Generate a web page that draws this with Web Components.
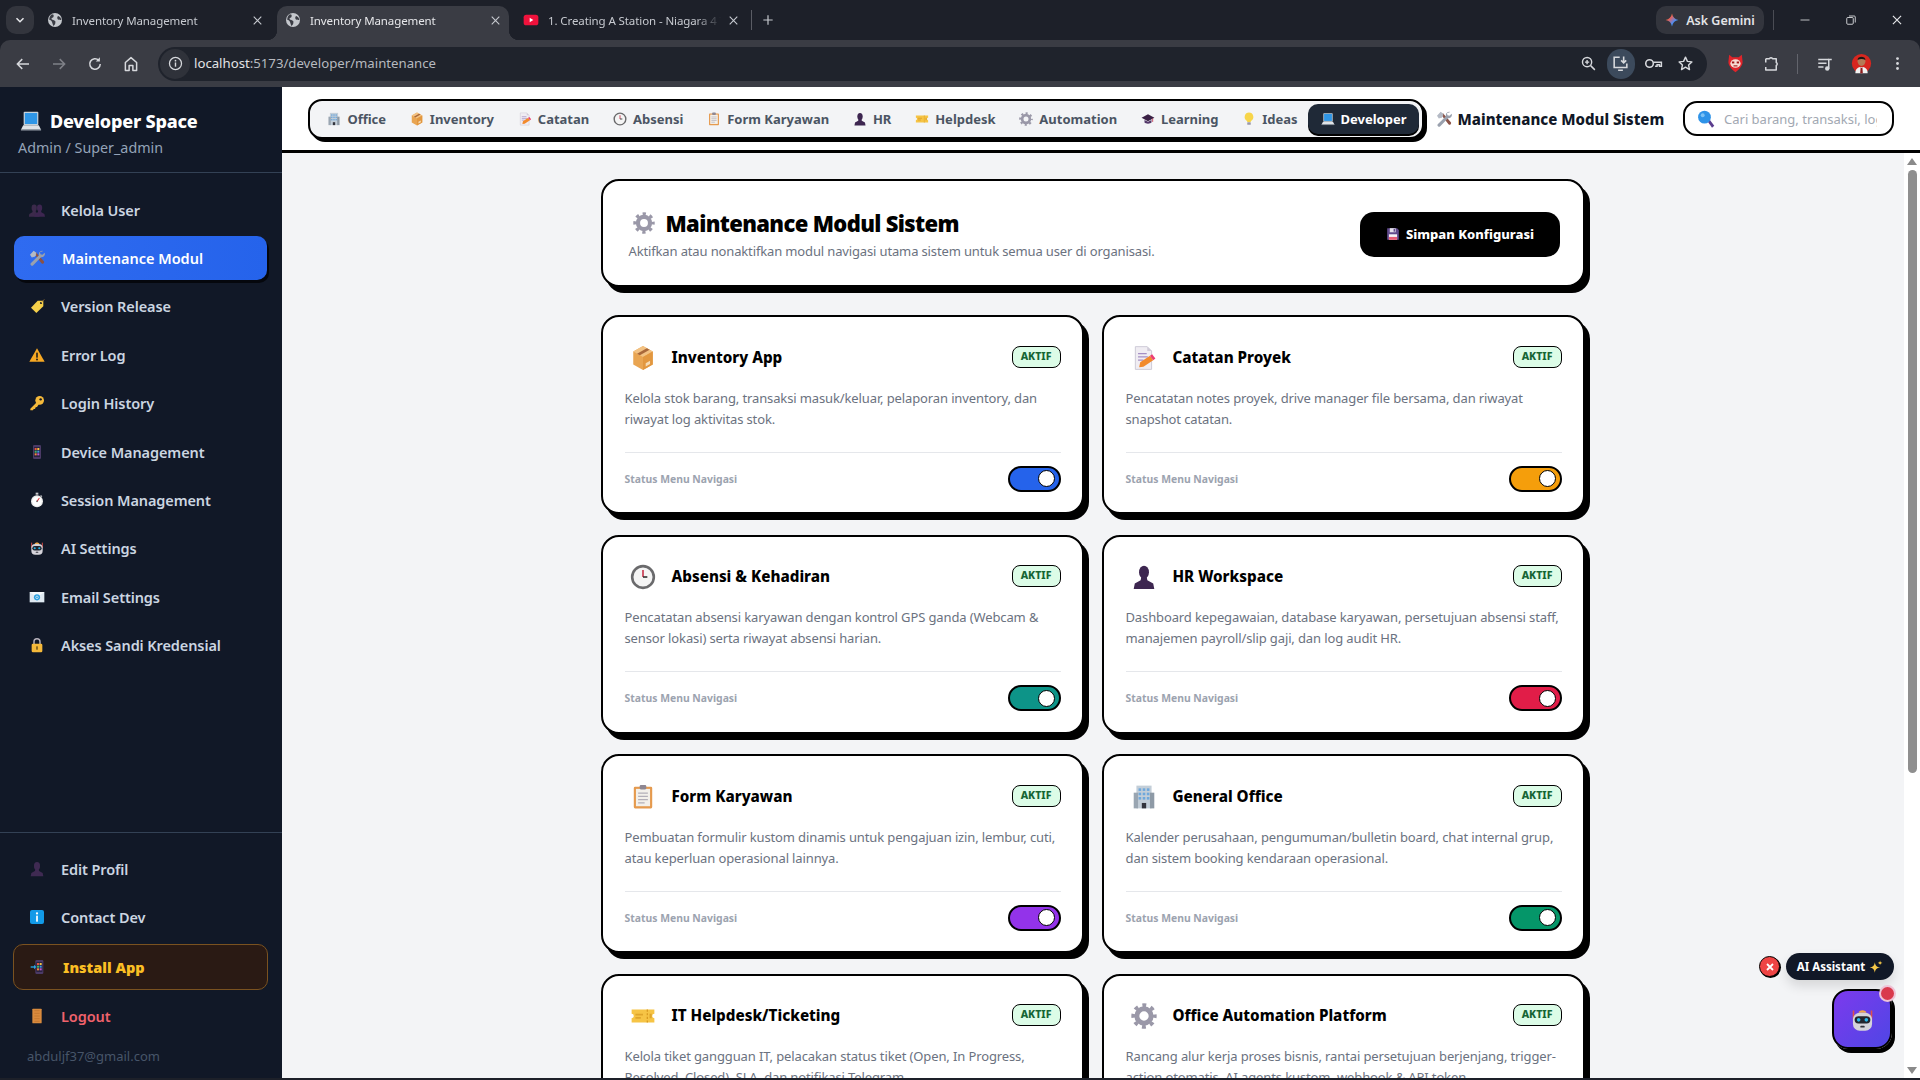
<!DOCTYPE html>
<html lang="id">
<head>
<meta charset="utf-8">
<title>Inventory Management</title>
<style>
html, body { margin: 0; padding: 0; width: 1920px; height: 1080px; overflow: hidden; background: #f3f4f6; }
body { font-family: "Noto Sans", "Open Sans", sans-serif; }
</style>
</head>
<body>
<app-root></app-root>
<script>
// semua ikon digambar manual, emoji tidak tersedia di sandbox
const gear = (c) => `<circle cx="12" cy="12" r="6.6" fill="none" stroke="${c}" stroke-width="4.6"/><circle cx="12" cy="12" r="10" fill="none" stroke="${c}" stroke-width="3.4" stroke-dasharray="3.6 4.25" stroke-dashoffset="1.8"/>`;
const phone = `<rect x="6" y="1.5" width="12" height="21" rx="2" fill="#4b3a66"/><rect x="7.5" y="4.5" width="9" height="15" fill="#2a2340"/><rect x="8.5" y="6" width="3" height="3" fill="#e8553f"/><rect x="12.5" y="6" width="3" height="3" fill="#f5c242"/><rect x="8.5" y="10" width="3" height="3" fill="#3fb56b"/><rect x="12.5" y="10" width="3" height="3" fill="#3b9be0"/><rect x="8.5" y="14" width="3" height="3" fill="#f28a3c"/><rect x="12.5" y="14" width="3" height="3" fill="#c05bd0"/>`;
const bust = (c) => `<ellipse cx="12" cy="7.5" rx="4.6" ry="6" fill="${c}"/><path d="M9.5 12h5l.6 3 5.4 3 1 5H2.5l1-5 5.4-3z" fill="${c}"/>`;
const ICONS = {
  building: `<rect x="5" y="1.5" width="14" height="21" fill="#c3ced8"/><rect x="2.5" y="8" width="4" height="14.5" fill="#9aa6b2"/><rect x="17.5" y="8" width="4" height="14.5" fill="#8e9aa6"/><g fill="#6fa8dc"><rect x="7" y="4" width="2.4" height="2.4"/><rect x="10.8" y="4" width="2.4" height="2.4"/><rect x="14.6" y="4" width="2.4" height="2.4"/><rect x="7" y="8" width="2.4" height="2.4"/><rect x="10.8" y="8" width="2.4" height="2.4"/><rect x="14.6" y="8" width="2.4" height="2.4"/><rect x="7" y="12" width="2.4" height="2.4"/><rect x="10.8" y="12" width="2.4" height="2.4"/><rect x="14.6" y="12" width="2.4" height="2.4"/></g><rect x="10" y="17.5" width="4" height="5" fill="#33343c"/>`,
  package: `<path d="M12 1 21 6v12l-9 5-9-5V6z" fill="#e9a552"/><path d="M12 1 21 6l-9 5-9-5z" fill="#f3c283"/><path d="M12 11 21 6v12l-9 5z" fill="#e2973f"/><path d="m6.5 8 9-5.100 2.600 1.500-9 5.100z" fill="#a9683a"/><path d="m14.500 16.800 4-2.200v3l-4 2.200z" fill="#f6dcb6"/>`,
  memo: `<path d="M4 1.500h11l4 4v17H4z" fill="#f0edf3" stroke="#c9c5d2" stroke-width=".8"/><path d="M15 1.500v4h4z" fill="#cfcad8"/><g stroke="#a58fc4" stroke-width="1.2"><path d="M6.500 8h8M6.500 11h9M6.500 14h5"/></g><path d="m7.500 20.500 1-4.500 9-6 3 4-9 6z" fill="#f28a2c"/><path d="m17.500 10 2-1.400 3 3.900-2 1.500z" fill="#ec3d73"/>`,
  clock: `<circle cx="12" cy="12" r="10" fill="#f4f4f4" stroke="#6a6a6c" stroke-width="2.4"/><path d="M12 5.500V12" stroke="#c8344c" stroke-width="1.5"/><path d="M12 12h4" stroke="#333" stroke-width="1.5"/>`,
  clipboard: `<rect x="3.500" y="2.500" width="17" height="20" rx="1.2" fill="#e59a4e"/><rect x="5.500" y="4.500" width="13" height="16" fill="#f3f0ea"/><rect x="9" y="1" width="6" height="4" rx="1" fill="#8e8792"/><g stroke="#b3afb8" stroke-width="1.2"><path d="M7.500 8.500h9M7.500 11.500h9M7.500 14.500h9M7.500 17.500h6"/></g>`,
  bust: bust('#3d2650'),
  ticket: `<path d="M1.500 6h21v4a2 2 0 0 0 0 4v4h-21v-4a2 2 0 0 0 0-4z" fill="#f6c445"/><path d="M16 6v12" stroke="#d99b22" stroke-width="1.2" stroke-dasharray="2 1.4"/><path d="M5 10h7v1.500H5zM5 13h5v1.500H5zM18 10h2v4h-2z" fill="#dfa52c"/>`,
  gear: gear('#9a98a8'),
  cap: `<path d="M12 4 23 10l-11 6L1 10z" fill="#3a2145"/><path d="M6 13.500V18c2 2.600 10 2.600 12 0v-4.500l-6 3.200z" fill="#54386a"/><path d="M20 11.200V17" stroke="#c8344c" stroke-width="1.4"/>`,
  bulb: `<path d="M12 1a7.500 7.500 0 0 0-4 13.800c.6.500 1 1.400 1 2.200h6c0-.8.4-1.700 1-2.200A7.500 7.500 0 0 0 12 1z" fill="#f7d54a"/><rect x="9" y="17.500" width="6" height="4.500" rx="1" fill="#9a98a8"/>`,
  laptop: `<rect x="4" y="2" width="16" height="14.500" rx="1" fill="#c8d2da"/><rect x="5.300" y="3.300" width="13.400" height="12" fill="#2f96e6"/><path d="M3.500 16.500h17L23 21.500H1z" fill="#dfe3e7"/><rect x="1" y="21" width="22" height="1.400" fill="#8f96a0"/>`,
  tools: `<path d="m8 6 2.500-2.500L22 16.500a2.300 2.300 0 0 1-3.300 3.300z" fill="#8a5246"/><path d="M1.500 7 7 1l4.500 3.500-1.500 1.500 1 1.500-3.500 3.500-1.500-1-1.500 1.500z" fill="#b4bac5"/><path d="M21.500 1.500a5.200 5.200 0 0 0-6.600 6.300L3 19.500a2.400 2.400 0 0 0 3.400 3.400L18 11a5.200 5.200 0 0 0 5.500-7l-3.300 3.200-3-.8-.8-3z" fill="#9aa1ae"/>`,
  tag: `<path d="M13 4h8.500v8.300L11 22.500 3 14.500z" fill="#f5cf4a"/><circle cx="18" cy="7.500" r="1.600" fill="#111827"/><path d="M18 7.500 23 2" stroke="#b98b3a" stroke-width="1"/>`,
  warn: `<path d="M12 2 23.500 22H.5z" fill="#f7a823"/><rect x="10.700" y="8.500" width="2.600" height="7.500" fill="#33291a"/><circle cx="12" cy="18.700" r="1.600" fill="#33291a"/>`,
  key: `<circle cx="16" cy="8" r="6.500" fill="#f5b93a"/><circle cx="17.500" cy="6.500" r="1.800" fill="#111827"/><path d="M12 10.500 2 20.500v2.500h4l1-2h2l1-2.500 2-.5 3-4.500z" fill="#f5b93a"/>`,
  phone: phone,
  stopwatch: `<rect x="10" y="1" width="4" height="3" fill="#c8c8cc"/><path d="m18 4.500 2 2-1.200 1.200-2-2z" fill="#b8b8bc"/><circle cx="12" cy="14" r="9" fill="#ececec"/><circle cx="12" cy="14" r="7" fill="#fff"/><path d="m12 14 3.600-5" stroke="#d8343c" stroke-width="1.6"/><circle cx="12" cy="14" r="1.200" fill="#555"/>`,
  robot: `<path d="M4 4v8M20 4v8" stroke="#e0504a" stroke-width="1.4"/><path d="M8.500 6c0-3 7-3 7 0z" fill="#f0a94a"/><rect x="3.500" y="6" width="17" height="16" rx="6" fill="#d5d3da"/><rect x="5" y="9" width="14" height="6.600" rx="3.300" fill="#22252e"/><circle cx="8.600" cy="12.300" r="1.600" fill="#28b6ea"/><circle cx="15.400" cy="12.300" r="1.600" fill="#28b6ea"/><rect x="10" y="17.600" width="4" height="1.600" rx=".8" fill="#33343c"/>`,
  mail: `<rect x="1" y="4.500" width="22" height="15.500" fill="#dfe9f2"/><path d="m1 4.500 11 8 11-8z" fill="#f5f8fb"/><circle cx="12" cy="12.500" r="4.600" fill="#2a9fe0"/><circle cx="12" cy="12.500" r="1.900" fill="none" stroke="#e8f4fb" stroke-width="1.1"/>`,
  lock: `<path d="M7.500 11V7a4.500 4.500 0 0 1 9 0v4" fill="none" stroke="#b7b2bc" stroke-width="2.2"/><rect x="4" y="10" width="16" height="13" rx="2" fill="#f5b93a"/><rect x="11" y="14" width="2" height="5" fill="#5a4316"/>`,
  busts: `<g transform="translate(-5 0) scale(.85) translate(3 3)" opacity=".75">${bust('#4b3158')}</g><g transform="translate(4 0) scale(.85) translate(2 3)">${bust('#3d2650')}</g>`,
  user: bust('#3f2a52'),
  info: `<rect x="1.500" y="1.500" width="21" height="21" rx="3" fill="#129ae8"/><rect x="10.700" y="10" width="2.600" height="9" fill="#fff"/><circle cx="12" cy="6.600" r="1.700" fill="#fff"/>`,
  install: `<g transform="translate(2 0)">${phone}</g><path d="M1 12h6" stroke="#28a8ea" stroke-width="2"/><path d="m6 8.800 3.400 3.200L6 15.200z" fill="#28a8ea"/>`,
  door: `<rect x="5" y="1" width="14" height="22" rx="1" fill="#d98a3d"/><path d="M8 4h8M8 8h8M8 12h8M8 16h8M8 20h8" stroke="#b96f2c" stroke-width="1"/>`,
  floppy: `<path d="M2 2h17l3 3v17H2z" fill="#604a8c"/><rect x="6.500" y="2" width="10" height="7" fill="#e5e2ec"/><rect x="13" y="3" width="2.400" height="5" fill="#604a8c"/><rect x="5" y="12.500" width="14" height="9.500" fill="#f6f5f8"/><rect x="5" y="17" width="14" height="5" fill="#e85d76"/>`,
  search: `<path d="m14 15 3-2 6 8-3 2.500z" fill="#5b3d8e"/><circle cx="10" cy="9.500" r="8.500" fill="#2e93e8"/><circle cx="7.600" cy="7" r="2.600" fill="#7cc2f5"/>`,
  sparkles: `<path d="M10 4c1 6 3 8 9 9-6 1-8 3-9 9-1-6-3-8-9-9 6-1 8-3 9-9z" fill="#f7c948"/><path d="M19 1c.4 2.600 1.400 3.600 4 4-2.600.4-3.600 1.400-4 4-.4-2.600-1.400-3.600-4-4 2.600-.4 3.600-1.400 4-4z" fill="#f7c948"/>`,
  // ikon browser
  back: `<path d="M20 12H5M11 5.500 4.500 12l6.500 6.500" fill="none" stroke="currentColor" stroke-width="2"/>`,
  forward: `<path d="M4 12h15M13 5.500l6.500 6.500-6.500 6.500" fill="none" stroke="currentColor" stroke-width="2"/>`,
  reload: `<path d="M19 12a7 7 0 1 1-2-5" fill="none" stroke="currentColor" stroke-width="2"/><path d="M18.500 3v5.500H13z" fill="currentColor"/>`,
  home: `<path d="M4.500 20.500V10L12 3.500l7.500 6.500v10.500h-5V14h-5v6.500z" fill="none" stroke="currentColor" stroke-width="2" stroke-linejoin="round"/>`,
  circleinfo: `<circle cx="12" cy="12" r="8.500" fill="none" stroke="currentColor" stroke-width="1.800"/><rect x="11" y="10.500" width="2" height="6" fill="currentColor"/><circle cx="12" cy="8" r="1.200" fill="currentColor"/>`,
  zoom: `<circle cx="10" cy="10" r="6.500" fill="none" stroke="currentColor" stroke-width="2"/><path d="m15 15 6 6M7 10h6M10 7v6" stroke="currentColor" stroke-width="2"/>`,
  pwa: `<path d="M11 4H4v13h16v-5M9 20.500h6" fill="none" stroke="currentColor" stroke-width="2"/><path d="M16 3v8M12.800 8l3.200 3.200L19.200 8" fill="none" stroke="currentColor" stroke-width="2"/>`,
  keyline: `<circle cx="7" cy="12" r="4.800" fill="none" stroke="currentColor" stroke-width="2"/><path d="M12 10.500h10v5h-2.500v-2h-3v2H14" fill="none" stroke="currentColor" stroke-width="1.800"/>`,
  star: `<path d="m12 3 2.700 6 6.300.7-4.700 4.300 1.300 6.500L12 17.200 6.400 20.500 7.700 14 3 9.700 9.300 9z" fill="none" stroke="currentColor" stroke-width="2" stroke-linejoin="round"/>`,
  puzzle: `<path d="M5 5h5a2.200 2.200 0 0 1 4 0h5v5a2.200 2.200 0 0 1 0 4v6H5v-4" fill="none" stroke="currentColor" stroke-width="2" stroke-linejoin="round"/><path d="M5 5v5" stroke="currentColor" stroke-width="2"/>`,
  media: `<path d="M3 6h14M3 11h11M3 16h7" stroke="currentColor" stroke-width="2"/><path d="M17 18V6h4" fill="none" stroke="currentColor" stroke-width="2"/><circle cx="15" cy="18" r="3" fill="currentColor"/>`,
  dots: `<circle cx="12" cy="5" r="2" fill="currentColor"/><circle cx="12" cy="12" r="2" fill="currentColor"/><circle cx="12" cy="19" r="2" fill="currentColor"/>`,
  close: `<path d="m5 5 14 14M19 5 5 19" stroke="currentColor" stroke-width="2"/>`,
  closebold: `<path d="m6 6 12 12M18 6 6 18" stroke="currentColor" stroke-width="3.600"/>`,
  plus: `<path d="M12 4v16M4 12h16" stroke="currentColor" stroke-width="2"/>`,
  chevron: `<path d="m6 9 6 6 6-6" fill="none" stroke="currentColor" stroke-width="2.600"/>`,
  minimize: `<path d="M3 12h18" stroke="currentColor" stroke-width="1.600"/>`,
  restore: `<rect x="3.500" y="7" width="13" height="13.500" rx="2" fill="none" stroke="currentColor" stroke-width="1.700"/><path d="M8 4h10.500a2 2 0 0 1 2 2v11" fill="none" stroke="currentColor" stroke-width="1.700"/>`,
  globe: `<circle cx="12" cy="12" r="10.500" fill="#c4c7cc"/><path d="M8 3c-3 2-5 5-4.500 9 2 0 3 1 4 3 1 2 1 4 2 6 2-2 3-3 3-5 1-2-1-3-3-4-2 0-3-1-2.500-3 1.500 0 3-1 3-3 0-1.500 0-2-2.500-3zM17 6c-2 1-2 3-1 5 2 1 4 1 5.500 1-.3-2.500-2-5-4.500-6z" fill="#3a3c44"/>`,
  youtube: `<rect x="1" y="4" width="22" height="16" rx="4" fill="#f0123c"/><path d="m10 8.500 5.500 3.500-5.500 3.500z" fill="#fff"/>`,
  shield: `<path d="M4 1 8 4h8l4-3 1 9c0 5-5 10-9 13-4-3-9-8-9-13z" fill="#e0242a"/><ellipse cx="12" cy="12" rx="6.500" ry="5.500" fill="#f8dcd4"/><rect x="7.500" y="9.500" width="3" height="2.400" fill="#a01818"/><rect x="13.500" y="9.500" width="3" height="2.400" fill="#a01818"/><path d="M9.500 15h5" stroke="#a01818" stroke-width="1.400"/>`,
  avatar: `<circle cx="12" cy="12" r="11" fill="#d8261f"/><ellipse cx="12" cy="9.500" rx="4.500" ry="5.300" fill="#b57a56"/><path d="M7.500 8c0-5 9-5 9 0-3-1.500-6-1.500-9 0z" fill="#1d1512"/><path d="M5 23c0-5 3-7 7-7s7 2 7 7z" fill="#f2f2f2"/><path d="m11 16 1 1 1-1 .5 7h-3z" fill="#8c1c1c"/>`,
  gemini: `<defs><linearGradient id="g" x1="0" y1="0" x2="1" y2="1"><stop offset="0" stop-color="#f4b400"/><stop offset=".35" stop-color="#e8615a"/><stop offset=".65" stop-color="#4c8df5"/><stop offset="1" stop-color="#34c3e8"/></linearGradient></defs><path d="M12 1c1.300 6.500 4.500 9.700 11 11-6.500 1.300-9.700 4.500-11 11-1.300-6.500-4.500-9.700-11-11 6.500-1.300 9.700-4.500 11-11z" fill="url(#g)"/>`
};

class XIcon extends HTMLElement {
  connectedCallback() {
    const size = this.getAttribute('size') || 16;
    this.attachShadow({ mode: 'open' });
    this.shadowRoot.innerHTML = `
      <style>
        :host { display: inline-flex; flex: none; width: ${size}px; height: ${size}px; line-height: 0; }
        svg { width: 100%; height: 100%; display: block; }
      </style>
      <svg viewBox="0 0 24 24">${ICONS[this.getAttribute('name')] || ''}</svg>`;
  }
}

class ChromeTab extends HTMLElement {
  connectedCallback() {
    const icon = this.getAttribute('icon') || 'globe';
    this.attachShadow({ mode: 'open' });
    this.shadowRoot.innerHTML = `
      <style>
        :host { display: flex; align-items: center; flex: none; position: relative; width: 232px; height: 34px; box-sizing: border-box; padding: 0 6px 6px 8px; color: #c7cad0; font-size: 11.5px; letter-spacing: -.1px; border-radius: 10px 10px 0 0; }
        :host([active]) { background: #3a3c44; color: #e6e7ea; }
        :host([active])::before, :host([active])::after { content: ""; position: absolute; bottom: 0; width: 10px; height: 10px; background: radial-gradient(circle at 0 0, transparent 10px, #3a3c44 10.5px); }
        :host([active])::before { left: -10px; }
        :host([active])::after { right: -10px; background: radial-gradient(circle at 100% 0, transparent 10px, #3a3c44 10.5px); }
        .txt { flex: 1; margin-left: 9px; white-space: nowrap; overflow: hidden; -webkit-mask-image: linear-gradient(90deg, #000 85%, transparent 100%); mask-image: linear-gradient(90deg, #000 85%, transparent 100%); }
        x-icon { color: #c7cad0; }
      </style>
      <x-icon name="${icon}" size="16"></x-icon>
      <span class="txt"><slot></slot></span>
      <x-icon name="close" size="13" style="margin:0 1px 0 6px"></x-icon>`;
  }
}

class BrowserChrome extends HTMLElement {
  connectedCallback() {
    this.attachShadow({ mode: 'open' });
    this.shadowRoot.innerHTML = `
      <style>
        :host { display: block; flex: none; height: 87px; background: #1d2029; color: #c7cad0; font-size: 13.2px; }
        .strip { display: flex; align-items: flex-start; height: 40px; padding: 6px 0 0 6px; box-sizing: border-box; }
        .down { width: 28px; height: 28px; border-radius: 10px; background: #33353d; display: flex; align-items: center; justify-content: center; margin-right: 5px; color: #e6e7ea; }
        .sp { width: 6px; flex: none; }
        .sep { width: 1px; height: 20px; background: #5a5c64; margin: 4px 0 0 4px; }
        .plus { margin: 7px 0 0 9px; color: #c7cad0; }
        .gem { margin-left: auto; display: flex; align-items: center; gap: 7px; height: 28px; width: 108px; justify-content: center; box-sizing: border-box; background: #33353d; border-radius: 10px; color: #e3e4e7; font-size: 12.5px; font-weight: 600; }
        .wsep { width: 1px; height: 20px; background: #4a4c54; margin: 4px 8px 0 9px; }
        .win { width: 46px; height: 28px; display: flex; align-items: center; justify-content: center; color: #e6e7ea; }
        .bar { display: flex; align-items: center; height: 47px; background: #3a3c44; border-radius: 10px 10px 0 0; padding-left: 5px; }
        .btn { width: 36px; height: 34px; display: flex; align-items: center; justify-content: center; color: #d6d8dc; flex: none; }
        .btn.off { color: #7f8188; }
        .url { display: flex; align-items: center; flex: none; width: 1549px; height: 34px; margin-left: 9px; border-radius: 17px; background: #1f232c; box-sizing: border-box; padding-left: 2px; padding-right: 6px; }
        .inf { width: 30px; height: 30px; border-radius: 50%; background: #2f323a; display: flex; align-items: center; justify-content: center; color: #d6d8dc; }
        .addr { margin-left: 4px; padding-bottom: 2px; color: #e3e4e7; flex: 1; }
        .addr span { color: #b6b9bf; }
        .u { width: 32px; height: 34px; display: flex; align-items: center; justify-content: center; color: #d6d8dc; }
        .u.hl { background: #3c4a5c; border-radius: 15px; width: 24px; height: 30px; margin: 0 2.5px; padding: 0 2px; }
        .right { display: flex; align-items: center; margin-left: 10px; }
        .vsep { width: 1px; height: 20px; background: #62646c; margin: 0 8px 0 8px; }
      </style>
      <div class="strip">
        <div class="down"><x-icon name="chevron" size="14"></x-icon></div>
        <chrome-tab>Inventory Management</chrome-tab>
        <span class="sp"></span>
        <chrome-tab active>Inventory Management</chrome-tab>
        <span class="sp"></span>
        <chrome-tab icon="youtube">1. Creating A Station - Niagara 4 Training</chrome-tab>
        <span class="sep"></span>
        <x-icon class="plus" name="plus" size="14"></x-icon>
        <div class="gem"><x-icon name="gemini" size="14"></x-icon>Ask Gemini</div>
        <span class="wsep"></span>
        <div class="win"><x-icon name="minimize" size="12"></x-icon></div>
        <div class="win"><x-icon name="restore" size="12"></x-icon></div>
        <div class="win"><x-icon name="close" size="14"></x-icon></div>
      </div>
      <div class="bar">
        <div class="btn"><x-icon name="back" size="18"></x-icon></div>
        <div class="btn off"><x-icon name="forward" size="18"></x-icon></div>
        <div class="btn"><x-icon name="reload" size="18"></x-icon></div>
        <div class="btn"><x-icon name="home" size="18"></x-icon></div>
        <div class="url">
          <div class="inf"><x-icon name="circleinfo" size="17"></x-icon></div>
          <div class="addr">localhost<span>:5173/developer/maintenance</span></div>
          <div class="u"><x-icon name="zoom" size="17"></x-icon></div>
          <div class="u hl"><x-icon name="pwa" size="19"></x-icon></div>
          <div class="u"><x-icon name="keyline" size="19"></x-icon></div>
          <div class="u"><x-icon name="star" size="17"></x-icon></div>
        </div>
        <div class="right">
          <div class="btn"><x-icon name="shield" size="19"></x-icon></div>
          <div class="btn"><x-icon name="puzzle" size="18"></x-icon></div>
          <span class="vsep"></span>
          <div class="btn" style="margin-left:1px"><x-icon name="media" size="18"></x-icon></div>
          <div class="btn"><x-icon name="avatar" size="21"></x-icon></div>
          <div class="btn"><x-icon name="dots" size="17"></x-icon></div>
        </div>
      </div>`;
  }
}

class SideItem extends HTMLElement {
  connectedCallback() {
    this.attachShadow({ mode: 'open' });
    this.shadowRoot.innerHTML = `
      <style>
        :host { display: flex; align-items: center; height: 44px; margin: 0 15px 4.43px 14px; box-sizing: border-box; padding-left: 15px; gap: 16px; border-radius: 10px; color: #cbd5e1; font-size: 14.5px; font-weight: 600; letter-spacing: -.1px; white-space: nowrap; }
        :host([active]) { background: linear-gradient(90deg, #2f6bf0, #2563eb); color: #fff; box-shadow: 2px 3px 0 #05070d; gap: 17px; letter-spacing: 0; }
        :host([install]) { margin: 0 14px 4.43px 13px; height: 46px; padding-left: 16px; background: #2a1a14; border: 1px solid #7a5220; color: #fbbf24; font-weight: 900; gap: 17px; letter-spacing: 0; }
        :host([danger]) { color: #f0626c; }
      </style>
      <x-icon name="${this.getAttribute('icon')}" size="16"></x-icon>
      <span><slot></slot></span>`;
  }
}

class AppSidebar extends HTMLElement {
  connectedCallback() {
    this.attachShadow({ mode: 'open' });
    this.shadowRoot.innerHTML = `
      <style>
        :host { display: flex; flex-direction: column; flex: none; width: 282px; background: #111827; color: #fff; }
        .head { height: 86px; box-sizing: border-box; border-bottom: 1px solid #334155; padding: 20px 0 0 18px; }
        .brand { display: flex; align-items: center; gap: 8px; font-size: 18px; font-weight: 800; letter-spacing: -.2px; line-height: 28px; margin-left: 2px; }
        .sub { font-size: 14.3px; color: #94a3b8; line-height: 20px; margin-top: 3px; }
        .list { padding-top: 14.5px; flex: 1; }
        .foot { border-top: 1px solid #334155; padding-top: 14px; }
        .mail { font-size: 13px; color: #475569; margin: 0 0 12px 27px; line-height: 20px; padding-top: 3.5px; }
      </style>
      <div class="head">
        <div class="brand"><x-icon name="laptop" size="22"></x-icon>Developer Space</div>
        <div class="sub">Admin / Super_admin</div>
      </div>
      <div class="list">
        <side-item icon="busts">Kelola User</side-item>
        <side-item icon="tools" active>Maintenance Modul</side-item>
        <side-item icon="tag">Version Release</side-item>
        <side-item icon="warn">Error Log</side-item>
        <side-item icon="key">Login History</side-item>
        <side-item icon="phone">Device Management</side-item>
        <side-item icon="stopwatch">Session Management</side-item>
        <side-item icon="robot">AI Settings</side-item>
        <side-item icon="mail">Email Settings</side-item>
        <side-item icon="lock">Akses Sandi Kredensial</side-item>
      </div>
      <div class="foot">
        <side-item icon="user">Edit Profil</side-item>
        <side-item icon="info">Contact Dev</side-item>
        <side-item icon="install" install>Install App</side-item>
        <side-item icon="door" danger>Logout</side-item>
        <div class="mail">abduljf37@gmail.com</div>
      </div>`;
  }
}

class NavPill extends HTMLElement {
  connectedCallback() {
    this.attachShadow({ mode: 'open' });
    this.shadowRoot.innerHTML = `
      <style>
        :host { display: flex; align-items: center; gap: 6px; height: 30px; box-sizing: border-box; padding: 0 11.9px; border-radius: 10px; color: #4b5563; font-size: 13px; font-weight: 700; white-space: nowrap; }
        :host([active]) { background: #1f2937; color: #fff; box-shadow: 0 2px 0 #000; padding: 0 12px 0 13px; margin-left: -2px; }
      </style>
      <x-icon name="${this.getAttribute('icon')}" size="14"></x-icon>
      <span><slot></slot></span>`;
  }
}

class TopHeader extends HTMLElement {
  connectedCallback() {
    this.attachShadow({ mode: 'open' });
    this.shadowRoot.innerHTML = `
      <style>
        :host { display: flex; align-items: center; flex: none; height: 66px; box-sizing: border-box; background: #fff; border-bottom: 3px solid #000; padding: 0 26px; }
        nav { display: flex; align-items: center; flex: none; height: 40px; box-sizing: border-box; padding: 0 3px 0 5.5px; background: #f3f4f6; border: 2.5px solid #000; border-radius: 14px; box-shadow: 3px 3px 0 #000; }
        .title { display: flex; align-items: center; gap: 6px; margin-left: 12px; color: #111827; font-size: 15px; font-weight: 800; white-space: nowrap; }
        .search { margin-left: auto; flex: none; display: flex; align-items: center; gap: 9px; width: 211px; height: 35px; box-sizing: border-box; border: 2.5px solid #000; border-radius: 14px; padding: 0 15px 0 12px; overflow: hidden; color: #a2a8b2; font-size: 13px; white-space: nowrap; }
        .ph { overflow: hidden; padding-top: 1px; }
      </style>
      <nav>
        <nav-pill icon="building">Office</nav-pill>
        <nav-pill icon="package">Inventory</nav-pill>
        <nav-pill icon="memo">Catatan</nav-pill>
        <nav-pill icon="clock">Absensi</nav-pill>
        <nav-pill icon="clipboard">Form Karyawan</nav-pill>
        <nav-pill icon="bust">HR</nav-pill>
        <nav-pill icon="ticket">Helpdesk</nav-pill>
        <nav-pill icon="gear">Automation</nav-pill>
        <nav-pill icon="cap">Learning</nav-pill>
        <nav-pill icon="bulb">Ideas</nav-pill>
        <nav-pill icon="laptop" active>Developer</nav-pill>
      </nav>
      <div class="title"><x-icon name="tools" size="16"></x-icon>Maintenance Modul Sistem</div>
      <div class="search"><x-icon name="search" size="18"></x-icon><span class="ph">Cari barang, transaksi, log...</span></div>`;
  }
}

class HeroCard extends HTMLElement {
  connectedCallback() {
    this.attachShadow({ mode: 'open' });
    this.shadowRoot.innerHTML = `
      <style>
        :host { display: flex; align-items: center; justify-content: space-between; height: 108px; box-sizing: border-box; margin-bottom: 28px; background: #fff; border: 2.5px solid #000; border-radius: 18px; box-shadow: 5px 6px 0 #000; padding: 0 23px 0 25.5px; }
        .txt { margin-top: 2px; }
        h1 { display: flex; align-items: center; gap: 11px; margin: 0 0 0 4px; font-size: 22px; letter-spacing: -.65px; line-height: 32px; font-weight: 900; color: #000; }
        p { margin: 2px 0 0; font-size: 13px; letter-spacing: -.14px; line-height: 20px; color: #6b7280; }
        button { display: flex; align-items: center; justify-content: center; gap: 6px; width: 200px; height: 45px; margin-top: 3px; padding: 0 0 2px; border: 0; border-radius: 14px; background: #000; color: #fff; font: 800 13px "Noto Sans", sans-serif; }
      </style>
      <div class="txt">
        <h1><x-icon name="gear" size="22"></x-icon>Maintenance Modul Sistem</h1>
        <p>Aktifkan atau nonaktifkan modul navigasi utama sistem untuk semua user di organisasi.</p>
      </div>
      <button><x-icon name="floppy" size="14"></x-icon>Simpan Konfigurasi</button>`;
  }
}

class ToggleSwitch extends HTMLElement {
  connectedCallback() {
    this.attachShadow({ mode: 'open' });
    this.shadowRoot.innerHTML = `
      <style>
        :host { display: flex; align-items: center; justify-content: flex-end; flex: none; width: 53px; height: 26px; box-sizing: border-box; padding-right: 4px; border: 2.5px solid #000; border-radius: 13px; background: ${this.getAttribute('color')}; }
        i { display: block; width: 15px; height: 15px; border-radius: 50%; background: #fff; border: 1.5px solid #000; }
      </style>
      <i></i>`;
  }
}

class ModuleCard extends HTMLElement {
  connectedCallback() {
    this.attachShadow({ mode: 'open' });
    this.shadowRoot.innerHTML = `
      <style>
        :host { display: flex; flex-direction: column; height: 199.33px; box-sizing: border-box; padding: 22.5px 21.5px 0 21.5px; background: #fff; border: 2.5px solid #000; border-radius: 18px; box-shadow: 5px 6px 0 #000; }
        .head { display: flex; align-items: flex-start; height: 36px; margin-bottom: 12px; }
        .ic { display: flex; align-items: center; justify-content: center; width: 36px; height: 36px; margin-right: 11px; }
        h3 { flex: 1; margin: 0; font-size: 15.2px; line-height: 34px; font-weight: 800; color: #000; }
        .badge { height: 22px; box-sizing: border-box; width: 49px; margin-top: 6px; text-align: center; border: 1.5px solid #000; border-radius: 8px; background: #dcfce7; color: #166534; font-size: 10.5px; font-weight: 800; line-height: 19px; }
        .desc { height: 42px; margin-bottom: 22px; font-size: 13px; letter-spacing: -.12px; line-height: 21px; color: #6b7280; white-space: nowrap; }
        .foot { display: flex; align-items: center; justify-content: space-between; border-top: 1px solid #e5e7eb; padding-top: 13px; }
        .lbl { font-size: 10.4px; font-weight: 700; color: #9ca3af; }
      </style>
      <div class="head">
        <div class="ic"><x-icon name="${this.getAttribute('icon')}" size="26"></x-icon></div>
        <h3>${this.getAttribute('judul')}</h3>
        <div class="badge">AKTIF</div>
      </div>
      <div class="desc"><slot></slot></div>
      <div class="foot">
        <span class="lbl">Status Menu Navigasi</span>
        <toggle-switch color="${this.getAttribute('warna')}"></toggle-switch>
      </div>`;
  }
}

class AiFloat extends HTMLElement {
  connectedCallback() {
    this.attachShadow({ mode: 'open' });
    this.shadowRoot.innerHTML = `
      <style>
        :host { position: absolute; right: 26px; bottom: 31px; display: flex; flex-direction: column; align-items: flex-end; gap: 9px; }
        .top { display: flex; align-items: center; gap: 6px; }
        .x { display: flex; align-items: center; justify-content: center; width: 21px; height: 21px; box-sizing: border-box; border: 1.5px solid #000; border-radius: 50%; background: #ef4444; color: #fff; box-shadow: 1px 1px 0 #000; }
        .pill { display: flex; align-items: center; justify-content: center; gap: 4px; width: 108px; height: 27px; border-radius: 14px; background: #111827; color: #fff; font-size: 11.5px; font-weight: 700; box-shadow: 0 6px 12px rgba(0,0,0,.12); }
        .bot { position: relative; display: flex; align-items: center; justify-content: center; width: 60px; height: 60px; margin-right: 2px; box-sizing: border-box; border: 2.5px solid #000; border-radius: 16px; background: linear-gradient(135deg, #7c3aed, #4f46e5); box-shadow: 3px 4px 0 #000; }
        .dot { position: absolute; top: -6px; right: -6px; width: 13px; height: 13px; border-radius: 50%; background: #d9394c; border: 2px solid #eec3d6; }
      </style>
      <div class="top">
        <div class="x"><x-icon name="closebold" size="12"></x-icon></div>
        <div class="pill">AI Assistant <x-icon name="sparkles" size="14"></x-icon></div>
      </div>
      <div class="bot"><x-icon name="robot" size="27"></x-icon><span class="dot"></span></div>`;
  }
}

class FakeScroll extends HTMLElement {
  connectedCallback() {
    this.attachShadow({ mode: 'open' });
    this.shadowRoot.innerHTML = `
      <style>
        :host { display: flex; flex-direction: column; align-items: center; flex: none; width: 16px; background: #fff; }
        .up, .dn { width: 0; height: 0; border-left: 5px solid transparent; border-right: 5px solid transparent; }
        .up { border-bottom: 7px solid #8a8a8a; margin-top: 5px; }
        .th { width: 9px; height: 603px; margin-top: 5px; border-radius: 5px; background: #8f8f8f; }
        .dn { border-top: 7px solid #8a8a8a; margin-top: auto; margin-bottom: 4px; }
      </style>
      <div class="up"></div><div class="th"></div><div class="dn"></div>`;
  }
}

class AppRoot extends HTMLElement {
  connectedCallback() {
    this.attachShadow({ mode: 'open' });
    this.shadowRoot.innerHTML = `
      <style>
        :host { display: flex; flex-direction: column; position: relative; width: 1920px; height: 1080px; overflow: hidden; background: #f3f4f6; }
        .body { display: flex; flex: 1; min-height: 0; }
        .main { display: flex; flex-direction: column; flex: 1; min-width: 0; }
        .row { display: flex; flex: 1; min-height: 0; }
        .scroll { flex: 1; overflow: hidden; padding-top: 26px; background: #f3f4f6; }
        .wrap { width: 984px; margin: 0 auto; }
        .grid { display: grid; grid-template-columns: 483px 483px; gap: 20.2px 18px; }
        .strip { flex: none; height: 2px; background: #1d2029; }
      </style>
      <browser-chrome></browser-chrome>
      <div class="body">
        <app-sidebar></app-sidebar>
        <div class="main">
          <top-header></top-header>
          <div class="row">
            <div class="scroll">
              <div class="wrap">
                <hero-card></hero-card>
                <div class="grid">
                  <module-card icon="package" judul="Inventory App" warna="#2563eb">Kelola stok barang, transaksi masuk/keluar, pelaporan inventory, dan<br>riwayat log aktivitas stok.</module-card>
                  <module-card icon="memo" judul="Catatan Proyek" warna="#f59e0b">Pencatatan notes proyek, drive manager file bersama, dan riwayat<br>snapshot catatan.</module-card>
                  <module-card icon="clock" judul="Absensi &amp; Kehadiran" warna="#0d9488">Pencatatan absensi karyawan dengan kontrol GPS ganda (Webcam &amp;<br>sensor lokasi) serta riwayat absensi harian.</module-card>
                  <module-card icon="bust" judul="HR Workspace" warna="#e11d48">Dashboard kepegawaian, database karyawan, persetujuan absensi staff,<br>manajemen payroll/slip gaji, dan log audit HR.</module-card>
                  <module-card icon="clipboard" judul="Form Karyawan" warna="#9333ea">Pembuatan formulir kustom dinamis untuk pengajuan izin, lembur, cuti,<br>atau keperluan operasional lainnya.</module-card>
                  <module-card icon="building" judul="General Office" warna="#059669">Kalender perusahaan, pengumuman/bulletin board, chat internal grup,<br>dan sistem booking kendaraan operasional.</module-card>
                  <module-card icon="ticket" judul="IT Helpdesk/Ticketing" warna="#2563eb">Kelola tiket gangguan IT, pelacakan status tiket (Open, In Progress,<br>Resolved, Closed), SLA, dan notifikasi Telegram.</module-card>
                  <module-card icon="gear" judul="Office Automation Platform" warna="#2563eb">Rancang alur kerja proses bisnis, rantai persetujuan berjenjang, trigger-<br>action otomatis, AI agents kustom, webhook &amp; API token.</module-card>
                </div>
              </div>
            </div>
            <fake-scroll></fake-scroll>
          </div>
        </div>
      </div>
      <div class="strip"></div>
      <ai-float></ai-float>`;
  }
}

customElements.define('x-icon', XIcon);
customElements.define('chrome-tab', ChromeTab);
customElements.define('browser-chrome', BrowserChrome);
customElements.define('side-item', SideItem);
customElements.define('app-sidebar', AppSidebar);
customElements.define('nav-pill', NavPill);
customElements.define('top-header', TopHeader);
customElements.define('hero-card', HeroCard);
customElements.define('toggle-switch', ToggleSwitch);
customElements.define('module-card', ModuleCard);
customElements.define('ai-float', AiFloat);
customElements.define('fake-scroll', FakeScroll);
customElements.define('app-root', AppRoot);
</script>
</body>
</html>
